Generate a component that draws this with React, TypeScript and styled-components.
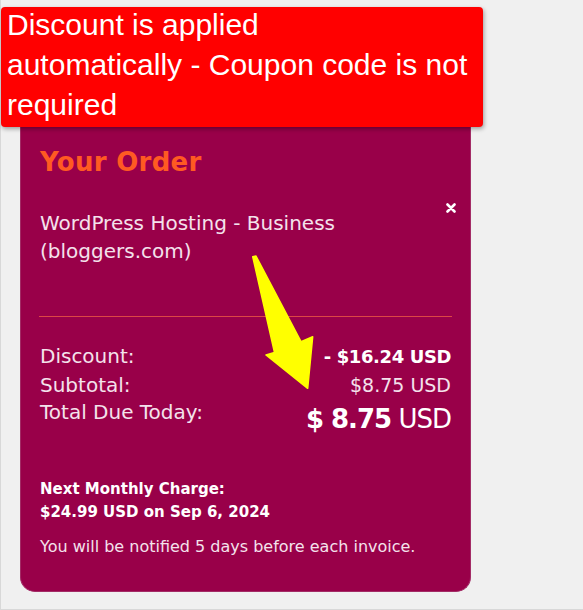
import React from 'react';
import styled, { createGlobalStyle } from 'styled-components';

const GlobalStyle = createGlobalStyle`
    html, body {
        margin: 0;
        padding: 0;
        background: #f0f0f0;
    }
`;

const Page = styled.div`
    position: relative;
    box-sizing: border-box;
    height: 610px;
    padding: 100px 0 0 19px;
    border-left: 1px solid #d8d8d8;
    border-bottom: 1px solid #d8d8d8;
    font-family: 'DejaVu Sans', 'Noto Sans', sans-serif;
`;

const Notice = styled.div`
    position: absolute;
    top: 7px;
    left: 0;
    z-index: 2;
    box-sizing: border-box;
    width: 482px;
    height: 120px;
    padding: 0 6px;
    background: #ff0000;
    border-radius: 4px;
    box-shadow: 1px 2px 4px rgba(0, 0, 0, 0.35);
    color: #ffffff;
    font-family: 'Liberation Sans', Arial, sans-serif;
    font-size: 30px;
    line-height: 40px;
`;

const NoticeText = styled.p`
    margin: -2px 0 0;
`;

const Card = styled.section`
    position: relative;
    box-sizing: border-box;
    width: 451px;
    padding: 47px 19px 34px;
    background: #990049;
    border: 1px solid #a32c66;
    border-top: none;
    border-radius: 0 0 15px 15px;
    color: #f4e2ec;
`;

const Title = styled.h2`
    margin: 0;
    color: #ff5a22;
    font-size: 26px;
    font-weight: 700;
    line-height: 31px;
    letter-spacing: 0.3px;
`;

const ProductRow = styled.div`
    display: flex;
    justify-content: space-between;
    align-items: flex-start;
    margin-top: 31px;
`;

const ProductName = styled.div`
    max-width: 340px;
    font-size: 20px;
    line-height: 28px;
`;

const RemoveButton = styled.button`
    display: flex;
    margin: -6px -5px 0 0;
    padding: 0;
    border: none;
    background: none;
    cursor: pointer;
`;

const Divider = styled.hr`
    margin: 51px -1px 0;
    border: none;
    height: 1px;
    background: #dc4745;
`;

const Totals = styled.div`
    margin-top: 25px;
`;

const Row = styled.div<{ $big?: boolean }>`
    display: flex;
    justify-content: space-between;
    align-items: flex-start;
    line-height: 29px;
    margin-top: ${(p) => (p.$big ? '-2px' : '0')};
`;

const Label = styled.span`
    font-size: 20px;
`;

const Amount = styled.span<{ $strong?: boolean }>`
    font-size: ${(p) => (p.$strong ? '18px' : '19px')};
    font-weight: ${(p) => (p.$strong ? 700 : 400)};
    color: ${(p) => (p.$strong ? '#ffffff' : '#f4e2ec')};
    letter-spacing: ${(p) => (p.$strong ? '-0.4px' : '0')};
`;

const TotalAmount = styled.span`
    color: #ffffff;
    font-size: 26px;
    line-height: 43px;
    letter-spacing: -1px;

    b {
        font-weight: 700;
    }
`;

const NextCharge = styled.div`
    margin-top: 37px;
    color: #ffffff;
    font-size: 15px;
    font-weight: 700;
    line-height: 23px;
`;

const Note = styled.p`
    margin: 13px 0 0;
    font-size: 16px;
    line-height: 20px;
`;

const Arrow = styled.svg`
    position: absolute;
    left: 230px;
    top: 155px;
    pointer-events: none;
`;

const CloseIcon = () => (
    <svg width="10" height="10" viewBox="0 0 10 10">
        <path d="M1.5 1.5 L8.5 8.5 M8.5 1.5 L1.5 8.5" stroke="#ffffff" strokeWidth="2.6" strokeLinecap="round" />
    </svg>
);

const App: React.FC = () => {
    return (
        <>
            <GlobalStyle />
            <Page>
                <Notice>
                    <NoticeText>
                        Discount is applied
                        <br />
                        automatically - Coupon code is not required
                    </NoticeText>
                </Notice>
                <Card>
                    <Title>Your Order</Title>
                    <ProductRow>
                        <ProductName>WordPress Hosting - Business (bloggers.com)</ProductName>
                        <RemoveButton aria-label="Remove">
                            <CloseIcon />
                        </RemoveButton>
                    </ProductRow>
                    <Divider />
                    <Totals>
                        <Row>
                            <Label>Discount:</Label>
                            <Amount $strong>- $16.24 USD</Amount>
                        </Row>
                        <Row>
                            <Label>Subtotal:</Label>
                            <Amount>$8.75 USD</Amount>
                        </Row>
                        <Row $big>
                            <Label>Total Due Today:</Label>
                            <TotalAmount>
                                <b>$ 8.75</b> USD
                            </TotalAmount>
                        </Row>
                    </Totals>
                    <NextCharge>
                        Next Monthly Charge:
                        <br />
                        $24.99 USD on Sep 6, 2024
                    </NextCharge>
                    <Note>You will be notified 5 days before each invoice.</Note>
                    <Arrow width="64" height="136" viewBox="0 0 64 136">
                        <polygon
                            points="1.7,1.7 23.5,97.5 15,100 56.7,133.3 61.7,81.7 50,86.7 5,1"
                            fill="#ffff00"
                            stroke="#ffff00"
                            strokeWidth="1.5"
                            strokeLinejoin="round"
                        />
                    </Arrow>
                </Card>
            </Page>
        </>
    );
};

export default App;
